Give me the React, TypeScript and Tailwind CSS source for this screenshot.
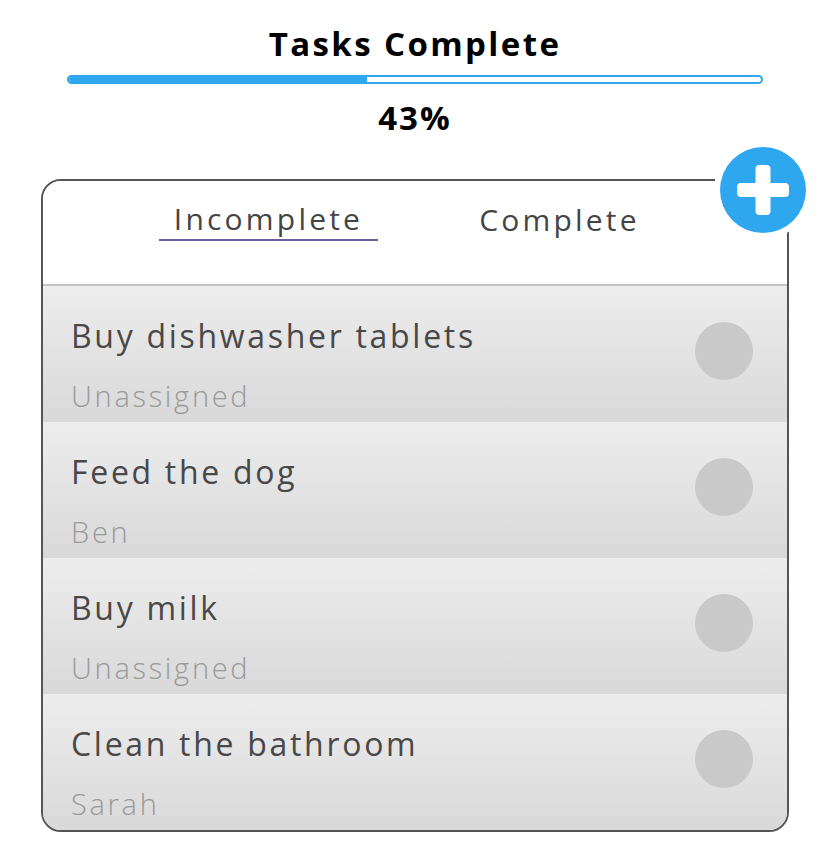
const tasks = [
  { title: "Buy dishwasher tablets", who: "Unassigned" },
  { title: "Feed the dog", who: "Ben" },
  { title: "Buy milk", who: "Unassigned" },
  { title: "Clean the bathroom", who: "Sarah" },
];

const App = () => {
  const percent = 43;

  return (
    <div className="relative min-h-[859px] bg-white font-['Open_Sans',sans-serif]">
      <div className="pt-[24px] ml-[41px] w-[748px] flex flex-col items-center">
        <h1 className="text-[33px] leading-[40px] font-bold tracking-[2.4px] text-black">Tasks Complete</h1>
        <div className="mt-[11px] w-[696px] h-[9px] rounded-full border-2 border-[#2fa6ee] bg-white overflow-hidden">
          <div className="h-full bg-[#2fa6ee]" style={{ width: `${percent}%` }} />
        </div>
        <div className="mt-[14px] text-[33px] leading-[40px] font-bold tracking-[2px] text-black">{percent}%</div>
      </div>

      {/* Task card */}
      <div className="mt-[41px] ml-[41px] w-[748px] rounded-[20px] border-2 border-[#555] overflow-hidden">
        <div className="h-[105px] flex justify-center gap-[72px] pr-[2px] border-b-2 border-[#c4c4c4] bg-white">
          <button
            type="button"
            className="mt-[18px] h-[42px] w-[219px] border-b-2 border-[#6b5f9e] text-[30px] leading-[40px] tracking-[3.2px] text-[#444]"
          >
            Incomplete
          </button>
          <button
            type="button"
            className="mt-[18px] h-[42px] w-[219px] text-[30px] leading-[40px] tracking-[3.2px] text-[#444]"
          >
            Complete
          </button>
        </div>

        {tasks.map((t) => (
          <div
            key={t.title}
            className="relative h-[136px] pl-[28px] pr-[34px] flex justify-between bg-gradient-to-b from-[#ededed] to-[#d9d9d9]"
          >
            <div className="flex flex-col pt-[30px]">
              <span className="text-[32px] leading-[40px] font-medium tracking-[2.7px] text-[#484848]">{t.title}</span>
              <span className="mt-[22px] text-[29px] leading-[36px] font-light tracking-[2.7px] text-[#9a9a9a]">{t.who}</span>
            </div>
            <div className="mt-[36px] w-[58px] h-[58px] rounded-full bg-[#c9c9c9]" />
          </div>
        ))}
      </div>

      {/* Add button */}
      <button
        type="button"
        className="absolute left-[720px] top-[147px] w-[86px] h-[86px] rounded-full bg-[#2ea7ee] ring-[6px] ring-white flex items-center justify-center"
      >
        <svg width="52" height="50" viewBox="0 0 52 50">
          <rect x="0" y="18" width="52" height="14" rx="4" fill="white" />
          <rect x="18.5" y="0" width="15" height="50" rx="4" fill="white" />
        </svg>
      </button>
    </div>
  );
};

export default App;
